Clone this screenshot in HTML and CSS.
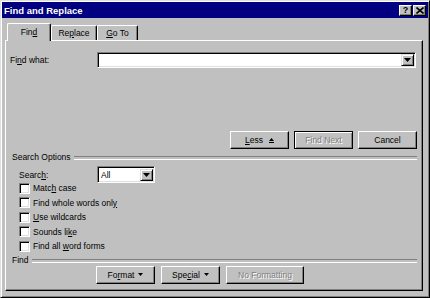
FILE: index.html
```html
<!DOCTYPE html>
<html>
<head>
    <link rel="stylesheet" href="styles.css">
</head>
<body>
    <div class="dialog">
        <div class="title-bar">
            <span class="title">Find and Replace</span>
            <div class="caption-buttons">
                <span class="caption-button">?</span>
                <span class="caption-button">
                    <svg width="8" height="7" viewBox="0 0 8 7"><path d="M0.5 0.5 L7.5 6.5 M7.5 0.5 L0.5 6.5" stroke="#000" stroke-width="1.6"/></svg>
                </span>
            </div>
        </div>
        <div class="dialog-body">
            <div class="tabs">
                <div class="tab tab-find active"><span>Fin<u>d</u></span></div>
                <div class="tab tab-replace"><span>Re<u>p</u>lace</span></div>
                <div class="tab tab-goto"><span><u>G</u>o To</span></div>
            </div>
            <div class="panel">
                <div class="find-row">
                    <span class="find-label">Fi<u>n</u>d what:</span>
                    <div class="combo">
                        <div class="combo-text"></div>
                        <span class="drop-button">
                            <svg width="7" height="4" viewBox="0 0 7 4"><path d="M0 0 H7 L3.5 4 Z" fill="#000"/></svg>
                        </span>
                    </div>
                </div>
                <div class="actions">
                    <button class="btn"><span><u>L</u>ess</span>
                        <svg class="less-arrow" width="5" height="5" viewBox="0 0 5 5"><path d="M2.5 0 L5 3 H0 Z M0 4 H5 V5 H0 Z" fill="#000"/></svg>
                    </button>
                    <button class="btn default disabled"><span>Find Next</span></button>
                    <button class="btn"><span>Cancel</span></button>
                </div>
                <div class="group-title search-options"><span>Search Options</span></div>
                <div class="search-row">
                    <span class="search-label">Searc<u>h</u>:</span>
                    <div class="select">
                        <span class="select-text">All</span>
                        <span class="drop-button">
                            <svg width="7" height="4" viewBox="0 0 7 4"><path d="M0 0 H7 L3.5 4 Z" fill="#000"/></svg>
                        </span>
                    </div>
                </div>
                <div class="checks">
                    <div class="check"><span class="box"></span><span>Matc<u>h</u> case</span></div>
                    <div class="check"><span class="box"></span><span>Find whole words onl<u>y</u></span></div>
                    <div class="check"><span class="box"></span><span><u>U</u>se wildcards</span></div>
                    <div class="check"><span class="box"></span><span>Sounds li<u>k</u>e</span></div>
                    <div class="check"><span class="box"></span><span>Find all <u>w</u>ord forms</span></div>
                </div>
                <div class="group-title find-group"><span>Find</span></div>
                <div class="bottom-buttons">
                    <button class="btn"><span>Fo<u>r</u>mat</span>
                        <svg class="menu-arrow" width="5" height="3" viewBox="0 0 5 3"><path d="M0 0 H5 L2.5 3 Z" fill="#000"/></svg>
                    </button>
                    <button class="btn"><span>Spe<u>c</u>ial</span>
                        <svg class="menu-arrow" width="5" height="3" viewBox="0 0 5 3"><path d="M0 0 H5 L2.5 3 Z" fill="#000"/></svg>
                    </button>
                    <button class="btn wide disabled"><span>No Formatting</span></button>
                </div>
            </div>
        </div>
    </div>
</body>
</html>
```

FILE: styles.css
```css
* {
    box-sizing: border-box;
}

body {
    margin: 0;
    padding: 0;
    font-family: "Liberation Sans", Arial, sans-serif;
    font-size: 8.5px;
    color: #000;
    background-color: #c0c0c0;
}

u {
    text-decoration-thickness: 1px;
    text-underline-offset: 1px;
}

.dialog {
    width: 430px;
    height: 298px;
    display: flex;
    flex-direction: column;
    background-color: #c0c0c0;
    border: 1px solid;
    border-color: #dfdfdf #000 #000 #dfdfdf;
    box-shadow: inset 1px 1px #fff, inset -1px -1px #808080;
    padding: 1px;
}

.title-bar {
    height: 16px;
    display: flex;
    align-items: center;
    justify-content: space-between;
    background-color: #000080;
    padding: 0 2px 0 2px;
}

.title {
    color: #fff;
    font-weight: bold;
    font-size: 9.5px;
}

.caption-buttons {
    display: flex;
    gap: 1px;
}

.caption-button {
    width: 13px;
    height: 11px;
    display: flex;
    align-items: center;
    justify-content: center;
    background-color: #c0c0c0;
    border: 1px solid;
    border-color: #fff #000 #000 #fff;
    box-shadow: inset -1px -1px #808080;
    font-weight: bold;
    font-size: 9px;
    line-height: 9px;
}

.dialog-body {
    flex: 1;
    display: flex;
    flex-direction: column;
    padding: 5px 5px 5px 3px;
}

.tabs {
    height: 17px;
    display: flex;
    align-items: flex-end;
    padding-left: 2px;
}

.tab {
    height: 15px;
    display: flex;
    align-items: center;
    justify-content: center;
    border-top: 1px solid #fff;
    border-left: 1px solid #fff;
    border-right: 1px solid #000;
    box-shadow: inset -1px 0 #808080;
    border-radius: 2px 2px 0 0;
    background-color: #c0c0c0;
}

.tab.active {
    height: 18px;
    margin-bottom: -1px;
    position: relative;
    z-index: 1;
    padding-bottom: 1px;
}

.tab-find {
    width: 44px;
}

.tab-replace {
    width: 46px;
}

.tab-goto {
    width: 41px;
}

.panel {
    flex: 1;
    display: flex;
    flex-direction: column;
    border: 1px solid;
    border-color: #fff #000 #000 #fff;
    box-shadow: inset -1px -1px #808080;
    padding: 0 5px 0 4px;
}

.find-row {
    display: flex;
    align-items: center;
    margin-top: 11px;
    height: 16px;
}

.find-label {
    width: 87px;
}

.combo,
.select {
    display: flex;
    align-items: center;
    background-color: #fff;
    border: 1px solid;
    border-color: #808080 #fff #fff #808080;
    box-shadow: inset 1px 1px #000, inset -1px -1px #dfdfdf;
    padding: 1px;
}

.combo {
    width: 319px;
    height: 16px;
}

.combo-text {
    flex: 1;
}

.drop-button {
    width: 13px;
    height: 12px;
    display: flex;
    align-items: center;
    justify-content: center;
    background-color: #c0c0c0;
    border: 1px solid;
    border-color: #dfdfdf #000 #000 #dfdfdf;
    box-shadow: inset 1px 1px #fff, inset -1px -1px #808080;
}

.actions {
    display: flex;
    justify-content: flex-end;
    gap: 5px;
    margin-top: 63px;
}

.btn {
    width: 59px;
    height: 18px;
    display: flex;
    align-items: center;
    justify-content: center;
    font-family: "Liberation Sans", Arial, sans-serif;
    font-size: 8.5px;
    color: #000;
    background-color: #c0c0c0;
    border: 1px solid;
    border-color: #fff #000 #000 #fff;
    box-shadow: inset -1px -1px #808080;
    padding: 0;
    border-radius: 0;
}

.btn.default {
    border-color: #000;
    box-shadow: inset 1px 1px #fff, inset -1px -1px #808080;
}

.btn.disabled {
    color: #808080;
    text-shadow: 1px 1px #fff;
}

.btn.wide {
    width: 78px;
}

.less-arrow {
    margin-left: 6px;
}

.menu-arrow {
    margin-left: 4px;
}

.group-title {
    height: 12px;
    display: flex;
    align-items: center;
    gap: 3px;
    padding-left: 2px;
}

.group-title::after {
    content: "";
    flex: 1;
    height: 2px;
    border-top: 1px solid #808080;
    border-bottom: 1px solid #fff;
    margin-top: 2px;
}

.search-options {
    margin-top: 2px;
}

.search-row {
    display: flex;
    align-items: center;
    margin-top: 3px;
    height: 17px;
}

.search-label {
    width: 87px;
    padding-left: 9px;
}

.select {
    width: 58px;
    height: 17px;
}

.select-text {
    flex: 1;
    padding-left: 2px;
}

.checks {
    display: flex;
    flex-direction: column;
    margin-top: -2px;
}

.check {
    height: 14.5px;
    display: flex;
    align-items: center;
    padding-left: 9px;
    gap: 3px;
}

.box {
    width: 11px;
    height: 11px;
    background-color: #fff;
    border: 1px solid;
    border-color: #808080 #fff #fff #808080;
    box-shadow: inset 1px 1px #000, inset -1px -1px #dfdfdf;
}

.bottom-buttons {
    display: flex;
    gap: 6px;
    margin-left: 86px;
}
```
